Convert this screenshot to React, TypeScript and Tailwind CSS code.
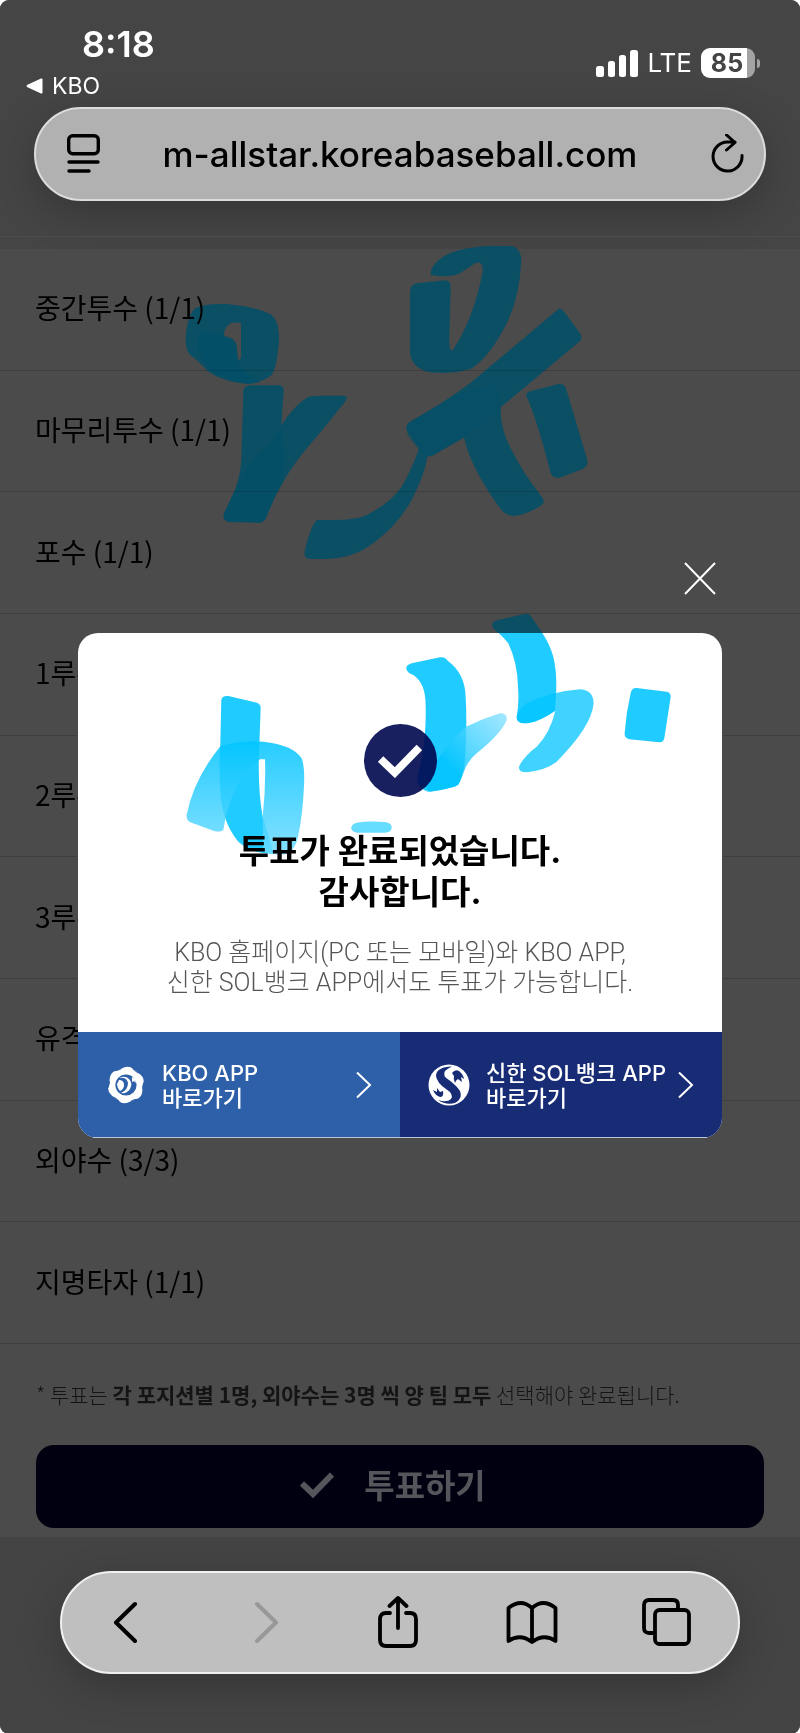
import type { ReactNode } from 'react';

const positions = [
  '중간투수 (1/1)',
  '마무리투수 (1/1)',
  '포수 (1/1)',
  '1루수 (1/1)',
  '2루수 (1/1)',
  '3루수 (1/1)',
  '유격수 (1/1)',
  '외야수 (3/3)',
  '지명타자 (1/1)',
];

function StatusBar() {
  return (
    <div className="flex h-[107px] items-start justify-between pl-[26px] pr-[40px] text-white">
      <div className="pt-[22px]">
        <p className="pl-[56px] text-[36px] leading-[44px] font-semibold">8:18</p>
        <a href="#kbo" className="flex items-center gap-[9px] pt-[4px] text-[23px] leading-[32px]">
          <svg viewBox="0 0 17 16" className="h-[16px] w-[17px]" fill="currentColor">
            <path d="M1 7 15 .6q1.500-.6 1.500 1v12.800q0 1.600-1.500 1L1 9Q0 8 1 7z" />
          </svg>
          KBO
        </a>
      </div>
      <div className="flex items-center gap-[9px] pt-[44px]">
        <svg viewBox="0 0 42 27" className="h-[27px] w-[42px]" fill="currentColor">
          <rect x="0" y="16" width="8" height="11" rx="2.500" />
          <rect x="12" y="11" width="7" height="16" rx="2.500" />
          <rect x="23" y="5" width="7" height="22" rx="2.500" />
          <rect x="34" y="0" width="8" height="27" rx="2.500" />
        </svg>
        <span className="text-[26px] leading-[38px]">LTE</span>
        <div className="flex items-center gap-[2px]">
          <div className="flex h-[30px] w-[54px] items-center justify-center rounded-[9px] bg-[linear-gradient(90deg,#fff_85%,#a3a3a3_85%)] pr-[2px] text-[25px] leading-[30px] font-bold text-[#444]">
            85
          </div>
          <div className="h-[9px] w-[3px] rounded-r-full bg-[#a3a3a3]" />
        </div>
      </div>
    </div>
  );
}

function AddressBar() {
  return (
    <div className="mx-[34px] flex h-[94px] items-center justify-between rounded-full border-2 border-[#dcdcdc] bg-[#b1b1b1] px-[20px] text-black shadow-[0_12px_40px_rgba(0,0,0,0.22)]">
      <button type="button" aria-label="페이지 메뉴" className="flex w-[44px] justify-end">
        <svg viewBox="0 0 34 40" className="h-[40px] w-[34px]" fill="none" stroke="currentColor" strokeWidth="3.400" strokeLinecap="round">
          <rect x="2.700" y="1.700" width="29.600" height="18" rx="4" />
          <path d="M3 28h29M3 37h20" />
        </svg>
      </button>
      <span className="text-[35px] leading-[44px] font-medium">m-allstar.koreabaseball.com</span>
      <button type="button" aria-label="새로고침" className="flex w-[44px] justify-end">
        <svg viewBox="0 0 34 40" className="h-[40px] w-[34px]" fill="none" stroke="currentColor" strokeWidth="3" strokeLinecap="round" strokeLinejoin="round">
          <path d="M32 21.500A14.500 14.500 0 1 1 17.500 8H25M16.500 1 25 8.500 16.500 16" />
        </svg>
      </button>
    </div>
  );
}

// marker strokes over the dimmed list
function ListScribble() {
  return (
    <svg viewBox="0 0 800 1733" className="pointer-events-none absolute top-0 left-0 w-[800px]" fill="#005068">
      <g transform="translate(160 230) scale(.3333)" fillOpacity=".85">
        <path fillRule="evenodd" d="M105 235Q130 220 200 222Q290 230 335 255Q358 275 357 330Q352 410 335 435Q300 462 258 462Q190 455 145 425Q120 400 105 385Q78 375 77 330Q80 260 105 235zM215 278Q190 290 192 322Q225 325 230 345L234 390L243 385V278z" />
        <path d="M112 310Q150 300 215 325Q230 335 230 360L234 400Q250 425 300 455Q260 468 200 445Q130 425 115 350z" fillOpacity=".7" />
        <path d="M250 480Q255 464 275 466H360Q372 470 371 485L364 585Q400 530 440 503Q450 497 480 497H555Q565 500 555 515Q520 560 470 620Q400 700 370 755Q340 805 318 865Q310 880 290 878L205 876Q187 870 192 850L225 780Q240 740 244 690z" />
        <path d="M365 590 372 650Q380 700 365 760Q340 805 318 865Q310 880 290 878L205 876Q187 870 192 850L225 780Q260 690 330 640z" fillOpacity=".6" />
        <path d="M812 135Q810 105 850 80Q900 50 1000 48H1055Q1083 55 1084 90Q1080 210 1030 300Q980 390 930 418Q870 435 800 425Q755 410 750 370V185Q752 162 770 160L855 151Q872 152 872 170L868 320Q867 365 877 362Q940 270 968 125Q970 90 945 100Q925 115 900 130Q870 145 812 135z" />
        <path d="M1198 235Q1208 238 1215 248L1260 310Q1270 325 1258 335L1022 532Q1020 600 1060 670Q1090 730 1145 800Q1158 815 1145 825Q1100 855 1060 858Q1035 855 1020 835Q930 710 912 622L820 676Q812 680 802 680Q795 730 760 800Q720 880 640 940Q580 985 500 987H450Q430 985 434 965Q445 910 465 875Q472 868 485 870Q580 873 620 855Q690 820 725 770Q750 730 778 655Q750 620 740 600Q737 585 750 575Q850 520 930 460z" />
        <path d="M890 495 1005 460Q1020 500 1022 540L910 625 820 676Q790 685 770 650Q740 620 740 600Q737 585 750 575z" fillOpacity=".45" />
        <path d="M1100 500Q1095 490 1110 484L1195 462Q1212 460 1218 475L1282 690Q1285 708 1270 716L1200 743Q1180 747 1172 730Q1150 640 1128 575Q1120 545 1100 500z" />
      </g>
      <path d="M493 628Q490 622 498 620L524 614Q530 613 532 618L544 635H500z" fillOpacity=".85" />
    </svg>
  );
}

// same marker, brighter where it crosses the white card
function CardScribble() {
  return (
    <svg viewBox="78 633 644 505" className="pointer-events-none absolute top-0 left-0 w-[644px] mix-blend-multiply" fill="#00c4ff">
      <defs>
        <linearGradient id="fadeDown" x1="0" y1="0" x2="0" y2="1">
          <stop offset="0" stopColor="#00c4ff" />
          <stop offset="1" stopColor="#6fdbff" />
        </linearGradient>
        <linearGradient id="fadeRight" x1="0" y1="1" x2="1" y2="0">
          <stop offset=".3" stopColor="#00c4ff" />
          <stop offset="1" stopColor="#8ee2ff" />
        </linearGradient>
      </defs>
      <g transform="translate(60 600) scale(.3333)" fillOpacity=".88">
        <path d="M484 300Q486 286 505 288L590 308Q603 312 602 325L598 440Q592 560 608 650Q625 700 640 760Q580 765 535 725Q490 670 482 590Q476 500 481 430z" />
        <path d="M480 440Q540 420 610 425Q700 435 725 475Q735 500 732 560Q728 650 712 720Q700 755 680 762Q640 768 610 755L608 650Q618 560 615 478H600Q560 510 530 560Q500 620 490 690Q480 698 460 692L395 668Q378 662 380 645Q400 540 480 440z" fill="url(#fadeDown)" fillOpacity=".85" />
        <path d="M890 668Q930 662 980 667Q997 672 995 685Q992 698 975 698H890Q873 695 874 682Q876 672 890 668z" fillOpacity=".6" />
      </g>
      <g transform="translate(380 540) scale(.3333)" fillOpacity=".88">
        <path d="M80 390Q75 376 95 370L180 352Q195 350 203 362Q255 400 257 470Q262 560 255 660Q250 710 235 735Q200 750 145 755Q100 740 115 700Q140 600 137 500Q138 430 100 405Q85 400 80 390z" />
        <path d="M258 560Q310 535 360 520Q382 518 380 540Q365 580 290 640Q260 665 250 700Q240 730 225 740L150 755Q130 740 150 700Q190 620 258 560z" fill="url(#fadeRight)" fillOpacity=".8" />
        <path d="M340 265 440 225Q500 280 520 350Q532 400 528 465L525 512Q470 550 435 550Q408 550 410 530Q418 490 414 440Q413 370 385 310Q365 285 340 265z" />
        <path d="M410 530Q415 510 440 490Q510 455 600 448Q640 450 641 490Q635 560 530 665Q500 690 440 697Q415 697 417 680Q430 650 470 620Q510 580 526 512Q480 545 435 550Q410 550 410 530z" fillOpacity=".75" />
        <path d="M752 460Q755 443 770 444L860 455Q873 457 872 472L853 595Q850 608 838 607L748 598Q732 594 734 580Q738 520 752 460z" />
      </g>
    </svg>
  );
}

function ChevronRight() {
  return (
    <svg viewBox="0 0 16 28" className="h-[28px] w-[16px] shrink-0" fill="none" stroke="currentColor" strokeWidth="2">
      <path d="M1 1.500 14 14 1 26.500" />
    </svg>
  );
}

function KboLogo() {
  return (
    <svg viewBox="-20 -20 40 40" className="size-[40px] shrink-0" fill="none">
      <circle r="13.800" stroke="currentColor" strokeWidth="6.400" />
      {[0, 60, 120, 180, 240, 300].map((angle) => (
        <g key={angle} transform={`rotate(${angle})`}>
          <path d="M-5-16Q1-20 6-17L8-14Z" fill="currentColor" />
          <path d="M7-17.500Q8-14 12-12" stroke="#2d60a8" strokeWidth=".8" />
        </g>
      ))}
      <path d="M-7-7Q1-8 2-2Q2 5-5 8Q1 9 4 4Q7-2 3-6Q-1-10-7-7z" fill="currentColor" />
      <path d="M-7-5Q-2-5-2 0Q-2 4-6 6Q-9 3-9-1z" fill="currentColor" />
      <path d="M6-8Q10-7 10-2Q8-5 6-3z" fill="currentColor" />
    </svg>
  );
}

function ShinhanLogo() {
  return (
    <svg viewBox="-21 -21 42 42" className="size-[42px] shrink-0" fill="#172c74">
      <circle r="20.500" fill="#fff" />
      <path d="M3-18.500Q-13-18-13-9Q-12-2-3 4Q5 9 2 14Q-2 18-11 15Q-2 21 7 17.500Q14 13 11 6Q8 1 0-5Q-7-9-4-14Q-1-17 3-18.500z" />
      <path d="M3-12Q6-16 10-14Q14-11 15-6L12-8 13-3 9-6Q7-5 6-2Q4-6 5-9z" />
      <path d="M-16 5-12 7-12 3-9 7-6 6Q-5 11-8 12Q-13 12-16 5z" />
    </svg>
  );
}

function AppLink({ href, className, icon, name }: { href: string; className: string; icon: ReactNode; name: string }) {
  return (
    <a href={href} className={`flex h-[105px] flex-1 items-center px-[28px] text-white ${className}`}>
      {icon}
      <span className="ml-[16px] flex-1 pt-[2px] text-[22px] leading-[25px] font-medium whitespace-nowrap">
        {name}
        <br />
        바로가기
      </span>
      <ChevronRight />
    </a>
  );
}

function CheckMark({ className }: { className: string }) {
  return (
    <svg viewBox="0 0 34 26" className={className} fill="none" stroke="currentColor" strokeWidth="6">
      <path d="M2 11.500 13 22 32 2.500" />
    </svg>
  );
}

function CompleteDialog() {
  return (
    <div role="dialog" aria-labelledby="done-title" className="absolute inset-x-[78px] top-[561px]">
      <div className="flex h-[72px] justify-end pr-[5px]">
        <button type="button" aria-label="닫기" className="size-[34px] text-white">
          <svg viewBox="0 0 34 34" fill="none" stroke="currentColor" strokeWidth="2">
            <path d="M2 2 32 33M32 2 2 33" />
          </svg>
        </button>
      </div>
      <div className="relative overflow-hidden rounded-[20px] bg-white">
        <div className="flex flex-col items-center pt-[91px] pb-[34px] text-center whitespace-nowrap">
          <div className="flex size-[73px] items-center justify-center rounded-full bg-[#182060] text-white">
            <CheckMark className="h-[34px] w-[44px]" />
          </div>
          <h2 id="done-title" className="mt-[34px] text-[33px] leading-[41px] font-bold text-black">
            투표가 완료되었습니다.
            <br />
            감사합니다.
          </h2>
          <p className="mt-[25px] font-[Roboto,'Noto_Sans_CJK_KR',sans-serif] text-[25px] leading-[30px] font-light text-[#555]">
            KBO 홈페이지(PC 또는 모바일)와 KBO APP,
            <br />
            신한 SOL뱅크 APP에서도 투표가 가능합니다.
          </p>
        </div>
        <div className="flex border-b border-[#b9c3da]">
          <AppLink href="#kbo-app" className="bg-[#2d60a8]" icon={<KboLogo />} name="KBO APP" />
          <AppLink href="#sol" className="bg-[#172c74]" icon={<ShinhanLogo />} name="신한 SOL뱅크 APP" />
        </div>
        <CardScribble />
      </div>
    </div>
  );
}

function Toolbar() {
  return (
    <nav className="mx-[60px] mt-[34px] grid h-[103px] grid-cols-5 place-items-center rounded-full border-2 border-[#f0f0f0] bg-[#bfbfbf] pr-[4px] pb-[2px] text-black shadow-[0_12px_40px_rgba(0,0,0,0.22)]">
      <button type="button" aria-label="뒤로">
        <svg viewBox="0 0 36 42" className="h-[42px] w-[36px]" fill="none" stroke="currentColor" strokeWidth="4" strokeLinecap="round" strokeLinejoin="round">
          <path d="M24 3 5 21.500 24 40" />
        </svg>
      </button>
      <button type="button" aria-label="앞으로" disabled className="text-[#989898]">
        <svg viewBox="0 0 28 42" className="h-[42px] w-[28px]" fill="none" stroke="currentColor" strokeWidth="4" strokeLinecap="round" strokeLinejoin="round">
          <path d="M7 3 26 21.500 7 40" />
        </svg>
      </button>
      <button type="button" aria-label="공유">
        <svg viewBox="0 0 42 52" className="h-[52px] w-[42px]" fill="none" stroke="currentColor" strokeWidth="3.800" strokeLinecap="round" strokeLinejoin="round">
          <path d="M13 17H9q-6 0-6 6v21q0 6 6 6h24q6 0 6-6V23q0-6-6-6h-4M21 32V3M12.500 10 21 2l8.500 8" />
        </svg>
      </button>
      <button type="button" aria-label="책갈피">
        <svg viewBox="0 0 52 44" className="h-[44px] w-[52px]" fill="none" stroke="currentColor" strokeWidth="3.800" strokeLinecap="round" strokeLinejoin="round">
          <path d="M26 8Q15-2 2.500 8V41Q14 33 26 42Q38 33 49.500 41V8Q37-2 26 8zV42" />
        </svg>
      </button>
      <button type="button" aria-label="탭">
        <svg viewBox="0 0 50 50" className="size-[50px]" fill="none" stroke="currentColor" strokeWidth="3.800" strokeLinejoin="round">
          <rect x="13" y="13" width="34" height="34" rx="4.500" />
          <path d="M13 36H7q-5 0-5-5V8q0-5 5-5h24q5 0 5 5v5" />
        </svg>
      </button>
    </nav>
  );
}

export default function App() {
  return (
    <div className="bg-white font-[Inter,'Noto_Sans_CJK_KR',sans-serif]">
      <div className="relative flex min-h-screen flex-col overflow-hidden rounded-[9px] bg-[#4b4b4b]">
        <header className="h-[249px] bg-[#454545]">
          <StatusBar />
          <AddressBar />
          <div className="mt-[35px] border-t border-[#4c4c4c]" />
        </header>

        <ListScribble />

        <main className="relative font-['Noto_Sans_CJK_KR',sans-serif]">
          <ul className="grid h-[1095px] auto-rows-fr">
            {positions.map((label) => (
              <li key={label} className="flex items-center border-b border-black/15 px-[35px] pb-[4px] text-[28px] text-black">
                {label}
              </li>
            ))}
          </ul>
          <p className="px-[36px] pt-[35px] text-[21px] leading-[30px] font-light whitespace-nowrap text-[#141414]">
            * 투표는 <strong className="font-bold">각 포지션별 1명, 외야수는 3명 씩 양 팀 모두</strong> 선택해야 완료됩니다.
          </p>
          <div className="px-[36px] pt-[36px] pb-[9px]">
            <button type="button" className="flex h-[83px] w-full items-center justify-center gap-[30px] rounded-[18px] bg-[#000010] pr-[14px] pb-[3px] text-[33px] font-bold text-[#55565c]">
              <CheckMark className="h-[26px] w-[34px]" />
              투표하기
            </button>
          </div>
        </main>

        <footer className="relative flex-1 bg-[#444] pb-[60px]">
          <Toolbar />
        </footer>

        <CompleteDialog />
      </div>
    </div>
  );
}
